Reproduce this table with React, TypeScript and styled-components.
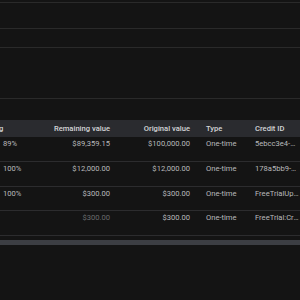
import React, { useLayoutEffect, useRef } from "react";
import styled, { createGlobalStyle } from "styled-components";

const GlobalStyle = createGlobalStyle`
  html, body {
    margin: 0;
    padding: 0;
    background: #141414;
  }
  body {
    font-family: Roboto, "Liberation Sans", sans-serif;
  }
`;

type Credit = {
  name: string;
  percent: number | null;
  remaining: string;
  original: string;
  type: string;
  id: string;
  scope: string;
  expired?: boolean;
};

const credits: Credit[] = [
  {
    name: "Startup program credit",
    percent: 89,
    remaining: "$89,359.15",
    original: "$100,000.00",
    type: "One-time",
    id: "5ebcc3e4-7a21-4d0e",
    scope: "All services",
  },
  {
    name: "Partner credit",
    percent: 100,
    remaining: "$12,000.00",
    original: "$12,000.00",
    type: "One-time",
    id: "178a5bb9-2c4f-41aa",
    scope: "All services",
  },
  {
    name: "Free trial upgrade",
    percent: 100,
    remaining: "$300.00",
    original: "$300.00",
    type: "One-time",
    id: "FreeTrialUpgrade",
    scope: "All services",
  },
  {
    name: "Free trial",
    percent: null,
    remaining: "$300.00",
    original: "$300.00",
    type: "One-time",
    id: "FreeTrial:Credit",
    scope: "All services",
    expired: true,
  },
];

function App() {
  const scrollRef = useRef<HTMLDivElement>(null);

  // table is scrolled sideways, credit name column is out of view
  useLayoutEffect(() => {
    if (scrollRef.current) scrollRef.current.scrollLeft = 161;
  }, []);

  return (
    <Page>
      <GlobalStyle />
      <Section height={2} />
      <Section height={25} />
      <Section height={18} />
      <Section height={50} />
      <Spacer />
      <TableScroll ref={scrollRef}>
        <Table>
          <colgroup>
            <col style={{ width: 120 }} />
            <col style={{ width: 79 }} />
            <col style={{ width: 80 }} />
            <col style={{ width: 80 }} />
            <col style={{ width: 49 }} />
            <col style={{ width: 60 }} />
            <col style={{ width: 100 }} />
          </colgroup>
          <thead>
            <tr>
              <Th>Credit name</Th>
              <Th>Remaining</Th>
              <Th align="right">Remaining value</Th>
              <Th align="right">Original value</Th>
              <Th>Type</Th>
              <Th>Credit ID</Th>
              <Th>Scope</Th>
            </tr>
          </thead>
          <tbody>
            {credits.map((c) => (
              <tr key={c.id}>
                <Td>{c.name}</Td>
                <Td>
                  {c.percent !== null && (
                    <Usage>
                      <Bar>
                        <BarFill style={{ width: `${c.percent}%` }} />
                      </Bar>
                      {c.percent}%
                    </Usage>
                  )}
                </Td>
                <Td align="right" dim={c.expired}>
                  {c.remaining}
                </Td>
                <Td align="right">{c.original}</Td>
                <Td>{c.type}</Td>
                <Td>{c.id}</Td>
                <Td>{c.scope}</Td>
              </tr>
            ))}
          </tbody>
        </Table>
      </TableScroll>
      <ScrollTrack />
    </Page>
  );
}
export default App;

const Page = styled.div`
  width: 300px;
  height: 300px;
  overflow: hidden;
  display: flex;
  flex-direction: column;
`;

const Section = styled.div<{ height: number }>`
  height: ${(p) => p.height}px;
  flex-shrink: 0;
  border-bottom: 1px solid #2a2a2a;
`;

const Spacer = styled.div`
  height: 21px;
  flex-shrink: 0;
`;

const TableScroll = styled.div`
  width: 300px;
  overflow: hidden;
  flex-shrink: 0;
`;

const Table = styled.table`
  width: 568px;
  table-layout: fixed;
  border-collapse: collapse;
  font-size: 7.6px;
`;

const Th = styled.th<{ align?: "left" | "right" }>`
  height: 17px;
  padding: 0 8px;
  background: #2a2b2f;
  color: #d4d5d7;
  font-weight: 500;
  text-align: ${(p) => p.align || "left"};
  white-space: nowrap;
  overflow: hidden;
  text-overflow: ellipsis;
`;

const Td = styled.td<{ align?: "left" | "right"; dim?: boolean }>`
  height: 24.5px;
  padding: 2px 8px 0;
  box-sizing: border-box;
  vertical-align: top;
  line-height: 9px;
  color: ${(p) => (p.dim ? "#6a6b6d" : "#b9babc")};
  text-align: ${(p) => p.align || "left"};
  border-bottom: 1px solid #2c2c2e;
  white-space: nowrap;
  overflow: hidden;
  text-overflow: ellipsis;
`;

const Usage = styled.div`
  display: flex;
  align-items: center;
  gap: 6px;
`;

const Bar = styled.div`
  width: 30px;
  height: 3px;
  flex-shrink: 0;
  background: #3a3b3f;
  border-radius: 2px;
  overflow: hidden;
`;

const BarFill = styled.div`
  height: 100%;
  background: #8ab4f8;
`;

const ScrollTrack = styled.div`
  height: 5px;
  margin-top: 4px;
  flex-shrink: 0;
  background: #3c3e43;
`;
